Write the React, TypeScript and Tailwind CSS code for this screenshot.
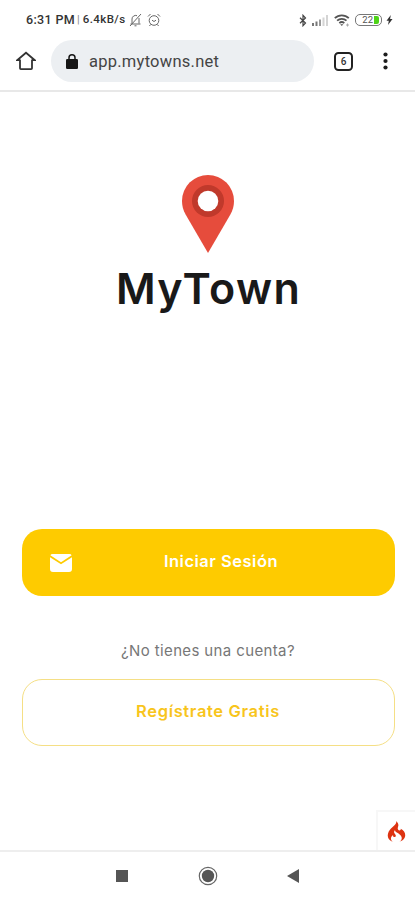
import React from "react";
import { SiCodeigniter } from "react-icons/si";

const StatusBar: React.FC = () => (
    <div className="flex h-10 items-center pl-[26px] pr-[22px] font-[Roboto,sans-serif] text-[#333]">
        <span className="whitespace-nowrap text-[12.5px] font-medium tracking-[0.35px]">6:31 PM</span>
        <span className="ml-[2px] text-[11px] text-[#888]">|</span>
        <span className="ml-[3px] whitespace-nowrap text-[11.5px] font-medium tracking-[0.4px]">6.4kB/s</span>
        {/* muted bell */}
        <svg className="ml-[3px] h-[14px] w-[13px]" viewBox="0 0 13 14" fill="none" stroke="#666" strokeWidth="1">
            <path d="M3 10.5V6a3.6 3.6 0 0 1 5-3.3M10 5v5.5M1.5 11h10M5.5 12.8h2M1 13 12 1" />
        </svg>
        {/* alarm clock */}
        <svg className="ml-[5px] h-[14px] w-[14px]" viewBox="0 0 14 14" fill="none" stroke="#666" strokeWidth="1">
            <circle cx="7" cy="7.5" r="4.8" />
            <path d="M1 3.5 3.5 1M13 3.5 10.5 1M5 7.2l2 1.3 2-1.3M3.5 11.5l-1 1.5M10.5 11.5l1 1.5" />
        </svg>
        <div className="ml-auto flex items-center">
            <svg className="h-[13px] w-[8px]" viewBox="0 0 8 13" fill="none" stroke="#444" strokeWidth="1.2">
                <path d="M1 3.8 6.5 9 4 11.7V1.3L6.5 4 1 9.2" />
            </svg>
            <svg className="ml-[5px] h-[11px] w-[16px]" viewBox="0 0 16 11">
                <path d="M0 8h2v3H0zM3.5 6.5h2V11h-2z" fill="#777" />
                <path d="M7 4.5h2V11H7z" fill="#999" />
                <path d="M10.5 2.5h2V11h-2zM14 0h2v11h-2z" fill="#d4d4d4" />
            </svg>
            <svg className="ml-[6px] h-[13px] w-[16px]" viewBox="0 0 16 13" fill="none" stroke="#555" strokeWidth="1.8">
                <path d="M.8 4.2a10 10 0 0 1 14 0M3.1 6.7a6.8 6.8 0 0 1 9.4 0M5.3 9.1a3.7 3.7 0 0 1 5 0" />
                <path d="m6.2 10.3 1.6 1.8 1.6-1.8z" fill="#555" stroke="none" />
                <path d="M12 11h3M13.5 9.5v3" stroke="#aaa" strokeWidth="1" />
            </svg>
            <div className="ml-[5px] flex h-[12px] w-[27px] items-center justify-end overflow-hidden rounded-[5px] border border-[#777] pr-[2px]">
                <span className="text-[9.5px] leading-none text-[#555]">22</span>
                <span className="ml-px h-[8px] w-[5px] rounded-r-[2px] bg-[#4ed318]" />
            </div>
            <svg className="ml-[4px] h-[10px] w-[7px]" viewBox="0 0 6 10" fill="#333">
                <path d="M4.3 0 0 5.7h2.3L1.5 10 6 4.1H3.6z" />
            </svg>
        </div>
    </div>
);

const AddressBar: React.FC = () => (
    <div className="flex h-[52px] items-start border-b-2 border-[#e8e8e8]">
        <svg className="ml-[16px] mt-[11px] h-[20px] w-[20px]" viewBox="0 0 20 20" fill="none" stroke="#333" strokeWidth="1.8">
            <path d="M4 9H1.4L10 1.7 18.6 9H16M4 8.5v8.8q0 .9.9.9h10.2q.9 0 .9-.9V8.5" />
        </svg>
        <div className="ml-[15px] flex h-[42px] w-[263px] items-center rounded-full bg-[#eceff2] pl-[15px]">
            <svg className="h-[15px] w-[12px]" viewBox="0 0 12 15">
                <rect y="5" width="12" height="10" rx="1.3" fill="#161616" />
                <path d="M3 6V3.8a3 3 0 0 1 6 0V6" fill="none" stroke="#161616" strokeWidth="1.5" />
            </svg>
            <span className="ml-[11px] mt-[2px] font-[Roboto,sans-serif] text-[16.5px] tracking-[0.25px] text-[#444]">app.mytowns.net</span>
        </div>
        <div className="ml-[20px] mt-[12px] flex h-[19px] w-[19px] items-center justify-center rounded-[4.5px] border-2 border-[#222] font-[Roboto,sans-serif] text-[10px] font-medium text-[#333]">
            6
        </div>
        <svg className="ml-[30px] mt-[12px] h-[18px] w-[5px]" viewBox="0 0 5 18" fill="#1c1c1c">
            <circle cx="2.5" cy="2.5" r="2.1" />
            <circle cx="2.5" cy="9" r="2.1" />
            <circle cx="2.5" cy="15.5" r="2.1" />
        </svg>
    </div>
);

const MapPin: React.FC = () => (
    <svg className="h-[78px] w-[52px]" viewBox="0 0 52 78">
        <path d="M26 0A26 26 0 0 0 0 26c0 5 1.2 9.2 3.6 13.5L26 78l22.4-38.5C50.8 35.2 52 31 52 26A26 26 0 0 0 26 0z" fill="#e64c3c" />
        <circle cx="26" cy="26" r="16" fill="#c0392b" />
        <circle cx="26" cy="26" r="10.3" fill="#fff" />
    </svg>
);

const NavigationBar: React.FC = () => (
    <div className="flex h-[50px] items-center border-t-2 border-[#eee] px-[116px]">
        <div className="h-[12px] w-[12px] bg-[#555]" />
        <svg className="ml-[70px] h-[20px] w-[20px]" viewBox="0 0 20 20">
            <circle cx="10" cy="10" r="8.7" fill="none" stroke="#666" strokeWidth="1.2" />
            <circle cx="10" cy="10" r="6.2" fill="#555" />
        </svg>
        <svg className="ml-[69px] h-[14px] w-[12px] shrink-0" viewBox="0 0 12 14" fill="#555">
            <path d="M12 0v14L0 7z" />
        </svg>
    </div>
);

const App: React.FC = () => {
    return (
        <div className="flex h-[900px] w-[415px] flex-col overflow-hidden bg-white">
            <StatusBar />
            <AddressBar />

            <main className="flex flex-1 flex-col items-center pl-px font-[Inter,sans-serif]">
                <div className="mt-[83px] flex flex-col items-center">
                    <MapPin />
                    <h1 className="mt-[11px] whitespace-nowrap pl-px text-[43px] font-semibold leading-[48px] tracking-[1.4px] text-[#191919]">
                        MyTown
                    </h1>
                </div>

                <button className="mt-[217px] flex h-[67px] w-[373px] items-center rounded-[20px] bg-[#fecb00] pl-[28px] pr-[50px] text-white">
                    <svg className="h-[18px] w-[22px]" viewBox="0 0 22 18" fill="#fff">
                        <path d="M2.5 0h17q1.5 0 2.2 1.2L11 8.2.3 1.2Q1 0 2.5 0z" />
                        <path d="M0 3.3 11 10.3l11-7V15q0 3-3 3H3q-3 0-3-3z" />
                    </svg>
                    <span className="flex-1 whitespace-nowrap pb-[2px] pl-[26px] text-center text-[16.5px] font-semibold tracking-[0.5px]">
                        Iniciar Sesión
                    </span>
                </button>

                <p className="mt-[43px] whitespace-nowrap text-[15px] leading-6 tracking-[0.37px] text-[#777]">¿No tienes una cuenta?</p>

                <button className="mt-[16px] h-[67px] w-[373px] rounded-[20px] border-[1.5px] border-[#f5df85] pb-[2px] text-[16.5px] font-semibold tracking-[0.65px] text-[#f8c51c]">
                    Regístrate Gratis
                </button>

                <div className="mt-auto flex h-[40px] w-[39px] items-center justify-center self-end border-l-2 border-t-2 border-[#f7f7f7]">
                    <SiCodeigniter className="h-[21px] w-[21px] text-[#dd3311]" />
                </div>
            </main>

            <NavigationBar />
        </div>
    );
};

export default App;
